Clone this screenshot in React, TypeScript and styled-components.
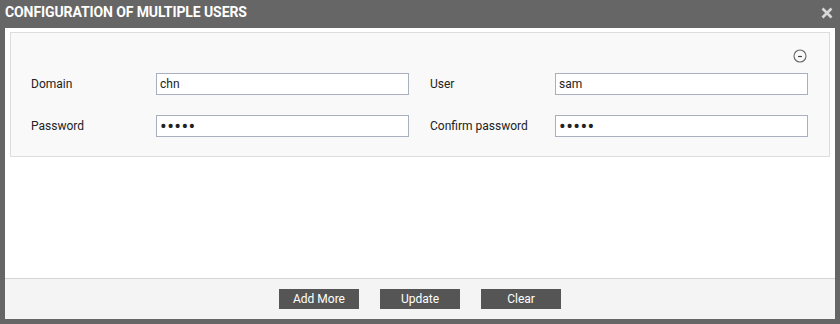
import React from "react";
import styled, { createGlobalStyle } from "styled-components";

const Global = createGlobalStyle`
  html, body { margin: 0; padding: 0; }
  body { font-family: Roboto, "Liberation Sans", Arial, sans-serif; background: #666; }
`;

const Dialog = styled.div`
  width: 840px;
  height: 324px;
  box-sizing: border-box;
  background: #666666;
  padding: 0 5px 5px 5px;
  display: flex;
  flex-direction: column;
`;

const TitleBar = styled.div`
  height: 28px;
  display: flex;
  align-items: center;
  justify-content: space-between;
  padding-bottom: 4px;
  box-sizing: border-box;
`;

const Title = styled.div`
  color: #fff;
  font-weight: 700;
  font-size: 14px;
  letter-spacing: -0.1px;
`;

const Close = styled.div`
  width: 14px;
  height: 14px;
  margin-right: 1px;
  margin-top: 1px;
  display: flex;
  align-items: center;
  justify-content: center;
`;

const Body = styled.div`
  flex: 1;
  background: #fff;
  display: flex;
  flex-direction: column;
`;

const Content = styled.div`
  flex: 1;
  padding: 4px 5px 0 5px;
`;

const Panel = styled.div`
  border: 1px solid #dddddd;
  background: #f9f9f9;
  padding: 16px 21px 19px 20px;
`;

const PanelHead = styled.div`
  display: flex;
  justify-content: flex-end;
  height: 24px;
  margin-right: 1px;
`;

const Grid = styled.div`
  display: grid;
  grid-template-columns: 378px 378px;
  column-gap: 21px;
  row-gap: 20px;
`;

const Field = styled.div`
  display: flex;
  align-items: center;
`;

const Label = styled.label`
  width: 125px;
  flex: none;
  font-size: 12px;
  color: #222;
`;

const Input = styled.input<{ $secret?: boolean }>`
  box-sizing: border-box;
  height: 22px;
  width: 253px;
  border: 1px solid #a8afbf;
  background: #fff;
  padding: 0 3px;
  font-family: Roboto, "Liberation Sans", Arial, sans-serif;
  font-size: ${(p) => (p.$secret ? "20px" : "12px")};
  letter-spacing: ${(p) => (p.$secret ? "0.4px" : "0")};
  color: #222;
  outline: none;
`;

const Footer = styled.div`
  border-top: 1px solid #d4d4d4;
  background: #f4f4f4;
  height: 41px;
  box-sizing: border-box;
  display: flex;
  justify-content: center;
  align-items: flex-start;
  padding-top: 10px;
  gap: 21px;
`;

const Button = styled.button`
  width: 80px;
  height: 20px;
  border: none;
  background: #555555;
  color: #fff;
  font-family: Roboto, "Liberation Sans", Arial, sans-serif;
  font-size: 12px;
  padding: 0;
  cursor: pointer;
`;

const MinusIcon = () => (
  <svg width="14" height="14" viewBox="0 0 14 14">
    <circle cx="7" cy="7" r="6" fill="none" stroke="#666" strokeWidth="1.1" />
    <line x1="5" y1="7.5" x2="9" y2="7.5" stroke="#444" strokeWidth="1.2" />
  </svg>
);

const fields = [
  { label: "Domain", value: "chn" },
  { label: "User", value: "sam" },
  { label: "Password", value: "12345", secret: true },
  { label: "Confirm password", value: "12345", secret: true },
];

export default function App() {
  return (
    <>
      <Global />
      <Dialog>
        <TitleBar>
          <Title>CONFIGURATION OF MULTIPLE USERS</Title>
          <Close>
            <svg width="12" height="12" viewBox="0 0 12 12">
              <path d="M1.5 1.5 L10.5 10.5 M10.5 1.5 L1.5 10.5" stroke="#d8d8d8" strokeWidth="2.6" />
            </svg>
          </Close>
        </TitleBar>
        <Body>
          <Content>
            <Panel>
              <PanelHead>
                <MinusIcon />
              </PanelHead>
              <Grid>
                {fields.map((f) => (
                  <Field key={f.label}>
                    <Label>{f.label}</Label>
                    <Input
                      $secret={f.secret}
                      type={f.secret ? "password" : "text"}
                      defaultValue={f.value}
                    />
                  </Field>
                ))}
              </Grid>
            </Panel>
          </Content>
          <Footer>
            <Button>Add More</Button>
            <Button>Update</Button>
            <Button>Clear</Button>
          </Footer>
        </Body>
      </Dialog>
    </>
  );
}
